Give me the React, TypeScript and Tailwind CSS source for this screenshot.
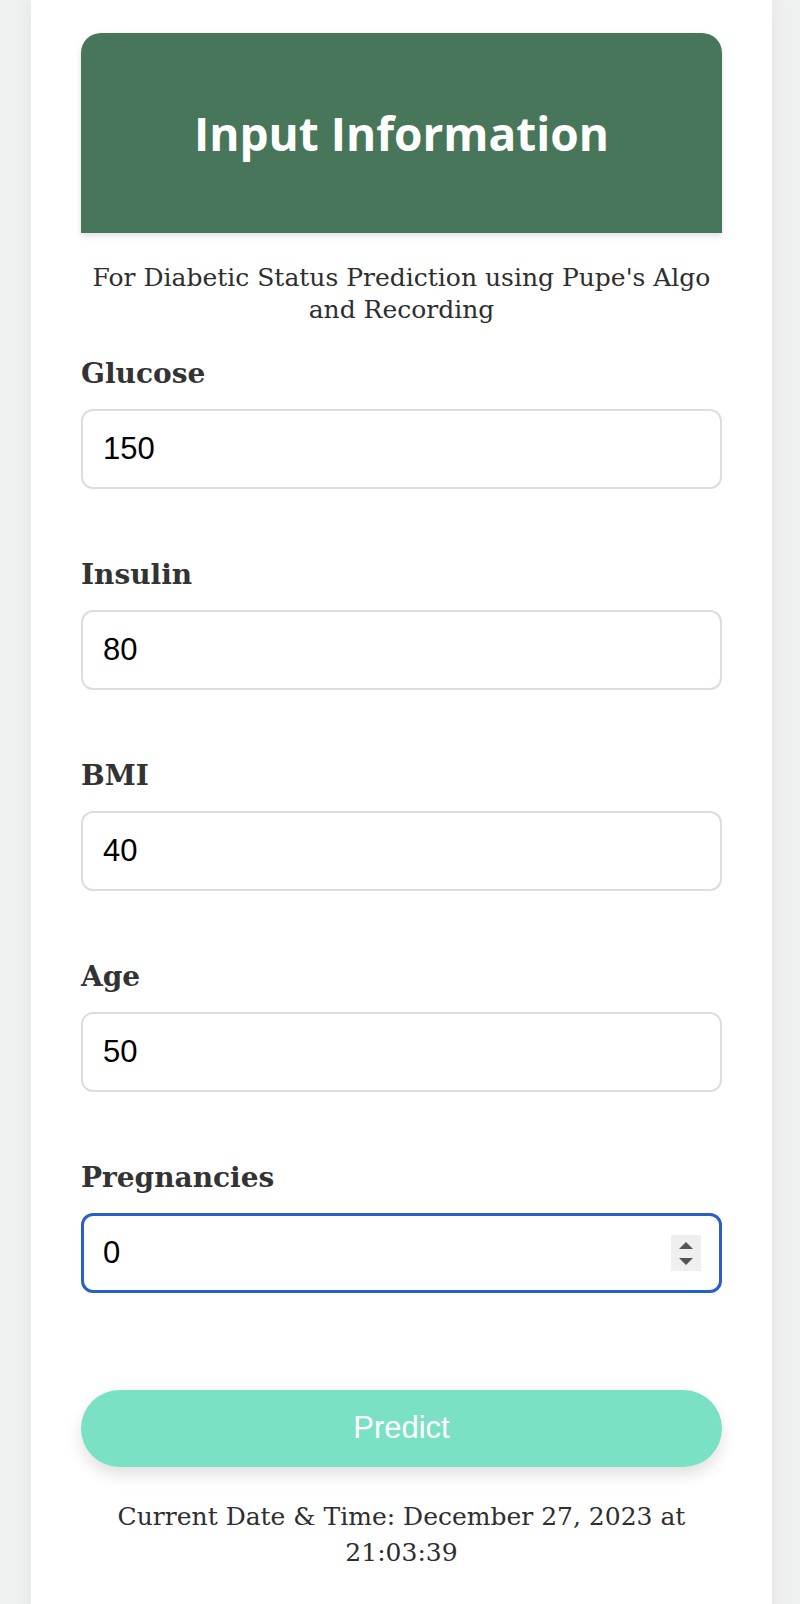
import { useState } from "react";

const fields = [
  { label: "Glucose", value: "150" },
  { label: "Insulin", value: "80" },
  { label: "BMI", value: "40" },
  { label: "Age", value: "50" },
  { label: "Pregnancies", value: "0", focused: true },
];

const serif = "font-['DejaVu_Serif',serif]";

function Spinner() {
  return (
    <div className="absolute right-[21px] top-1/2 -translate-y-1/2 w-[30px] h-[36px] bg-[#efefef] flex flex-col items-center justify-center gap-[9px]">
      <svg width="14" height="7" viewBox="0 0 14 7">
        <path d="M7 0 L14 7 L0 7 Z" fill="#555" />
      </svg>
      <svg width="14" height="7" viewBox="0 0 14 7">
        <path d="M0 0 L14 0 L7 7 Z" fill="#555" />
      </svg>
    </div>
  );
}

export default function App() {
  const [values, setValues] = useState(fields.map((f) => f.value));

  return (
    <div className="min-h-screen bg-[#eff1f0]">
      <div className="ml-[31px] w-[741px] min-h-screen bg-white shadow-[0_0_18px_rgba(0,0,0,0.06)] pt-[33px] px-[50px] pb-[60px]">
        {/* header */}
        <div className="h-[200px] rounded-t-[20px] bg-[#48765a] shadow-[0_3px_6px_rgba(0,0,0,0.12)] flex items-center justify-center">
          <h1 className="text-white font-['Open_Sans',sans-serif] font-bold text-[46px] leading-none">
            Input Information
          </h1>
        </div>

        <p className={`${serif} mt-[29px] text-center text-[#2e2e2e] text-[25px] leading-[32px]`}>
          For Diabetic Status Prediction using Pupe's Algo and Recording
        </p>

        <div className="mt-[32px] flex flex-col gap-[70px]">
          {fields.map((f, i) => (
            <div key={f.label} className="flex flex-col gap-[19px]">
              <label className={`${serif} font-bold text-[28px] leading-[32px] text-[#333]`}>
                {f.label}
              </label>
              <div className="relative">
                <input
                  value={values[i]}
                  onChange={(e) => {
                    const next = [...values];
                    next[i] = e.target.value;
                    setValues(next);
                  }}
                  className={`w-full h-[80px] rounded-[12px] bg-white text-black font-['Liberation_Sans',Arial,sans-serif] text-[31px] outline-none ${
                    f.focused
                      ? "border-[3px] border-[#2a5fc9] px-[19px]"
                      : "border-2 border-[#dddddd] px-[20px]"
                  }`}
                />
                {f.focused && <Spinner />}
              </div>
            </div>
          ))}
        </div>

        <button className="mt-[97px] w-full h-[77px] rounded-full bg-[#7be1c4] text-white font-['Liberation_Sans',Arial,sans-serif] text-[31px] shadow-[0_8px_16px_rgba(0,0,0,0.12)]">
          Predict
        </button>

        <p className={`${serif} mt-[32px] text-center text-[#2e2e2e] text-[25px] leading-[36px]`}>
          Current Date &amp; Time: December 27, 2023 at 21:03:39
        </p>
      </div>
    </div>
  );
}
